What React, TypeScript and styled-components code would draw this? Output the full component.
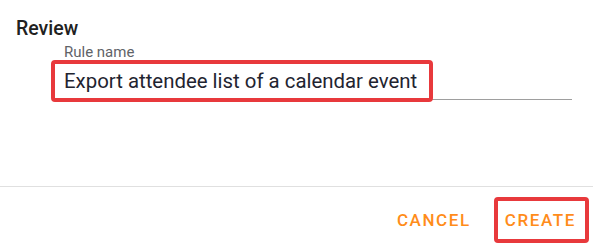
import styled, { createGlobalStyle } from "styled-components";

const Global = createGlobalStyle`
  html, body {
    margin: 0;
    padding: 0;
    background: #fff;
  }
  body {
    font-family: Roboto, "Liberation Sans", sans-serif;
  }
`;

const Dialog = styled.div`
  width: 593px;
  height: 247px;
  display: flex;
  flex-direction: column;
  background: #fff;
`;

const Body = styled.div`
  padding: 16px 21px 0 16px;
  height: 186px;
  box-sizing: border-box;
`;

const Title = styled.h2`
  margin: 0;
  font-size: 19.5px;
  font-weight: 500;
  line-height: 25px;
  color: #212121;
`;

const Field = styled.div`
  margin-left: 48px;
  display: flex;
  flex-direction: column;
`;

const Label = styled.label`
  font-size: 15px;
  line-height: 22px;
  color: #5f6368;
`;

const InputRow = styled.div`
  display: flex;
  align-items: flex-end;
  height: 36px;
  border-bottom: 1px solid #9e9e9e;
`;

const Value = styled.span`
  display: block;
  font-size: 20.4px;
  line-height: 26px;
  color: #1f2430;
  padding-bottom: 5px;
`;

// red annotation frame drawn over the content
const Mark = styled.span<{ $l: number; $t: number; $r: number; $b: number }>`
  position: relative;
  display: inline-block;
  &::after {
    content: "";
    position: absolute;
    left: ${(p) => -p.$l}px;
    top: ${(p) => -p.$t}px;
    right: ${(p) => -p.$r}px;
    bottom: ${(p) => -p.$b}px;
    border: 4px solid #e8393c;
    border-radius: 4px;
    pointer-events: none;
  }
`;

const Divider = styled.hr`
  margin: 0;
  border: 0;
  border-top: 1px solid #e0e0e0;
`;

const Actions = styled.div`
  display: flex;
  justify-content: flex-end;
  align-items: center;
  gap: 34px;
  padding: 6px 17px 0 0;
  flex: 1;
`;

const TextButton = styled.button`
  display: block;
  border: 0;
  background: none;
  padding: 0;
  font-family: inherit;
  font-size: 17px;
  line-height: 20px;
  font-weight: 500;
  letter-spacing: 1.6px;
  text-transform: uppercase;
  color: #ff8c1a;
  cursor: pointer;
`;

export default function App() {
  return (
    <>
      <Global />
      <Dialog>
        <Body>
          <Title>Review</Title>
          <Field>
            <Label>Rule name</Label>
            <InputRow>
              <Mark $l={13} $t={8} $r={16} $b={3}>
                <Value>Export attendee list of a calendar event</Value>
              </Mark>
            </InputRow>
          </Field>
        </Body>
        <Divider />
        <Actions>
          <TextButton>Cancel</TextButton>
          <Mark $l={11} $t={13} $r={13} $b={13}>
            <TextButton>Create</TextButton>
          </Mark>
        </Actions>
      </Dialog>
    </>
  );
}
